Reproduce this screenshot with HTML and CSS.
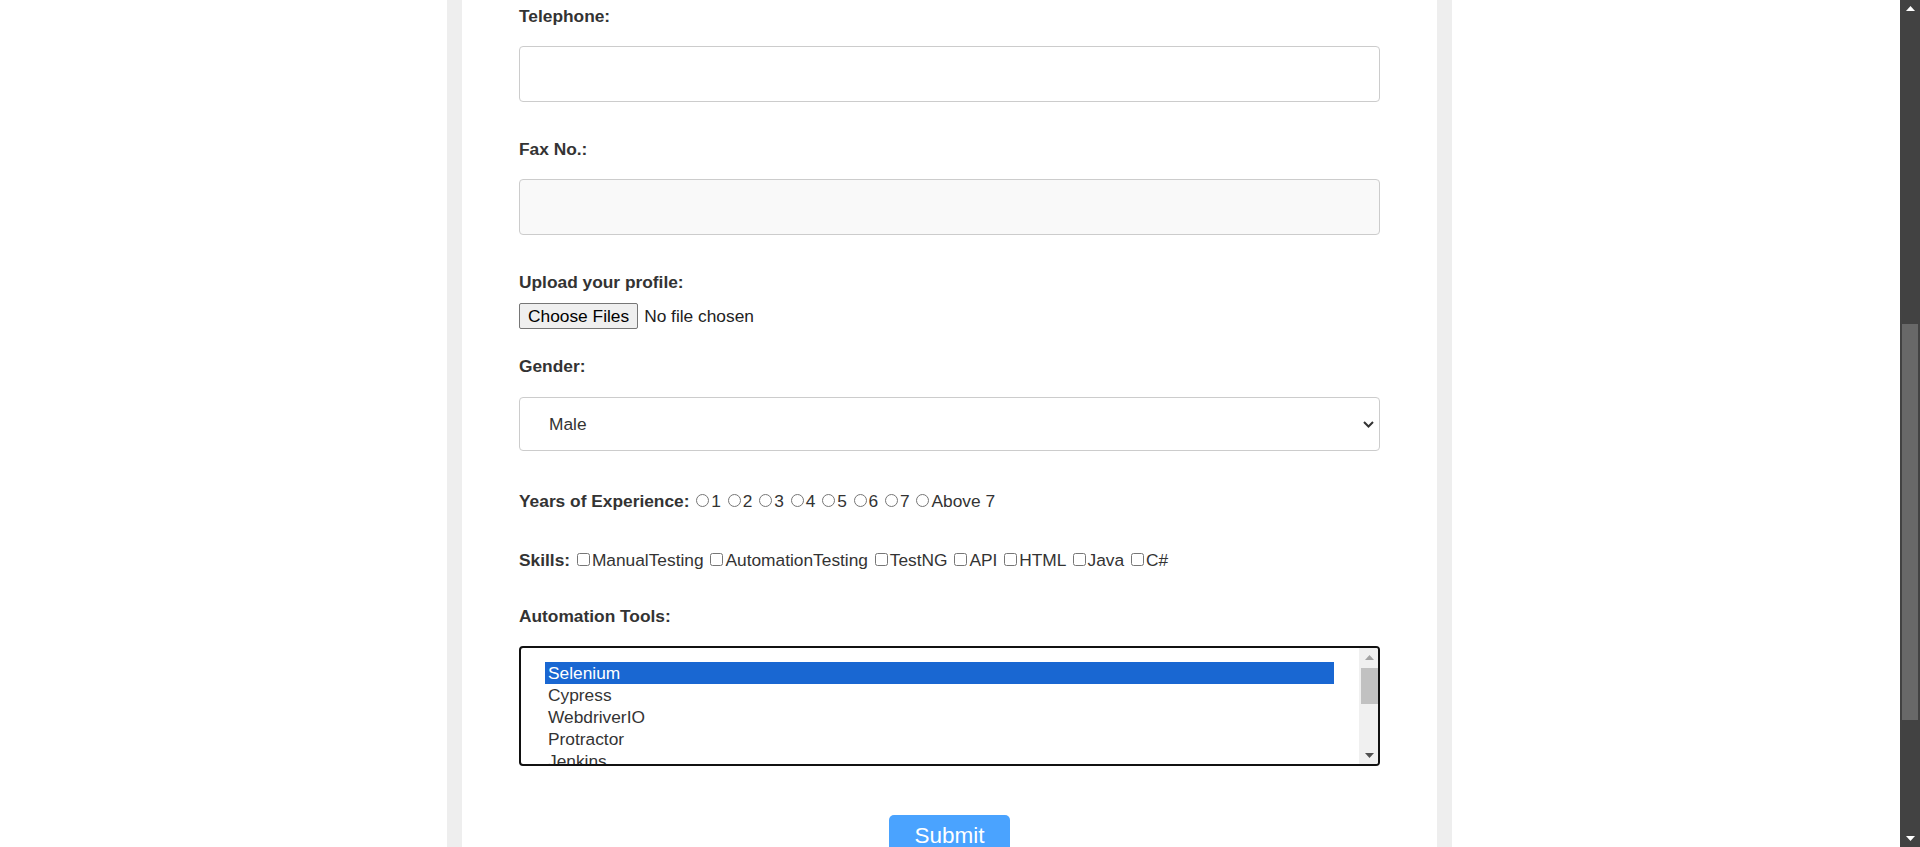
FILE: index.html
```html
<!DOCTYPE html>
<html lang="en">
<head>
<meta charset="utf-8">
<title>Registration Form</title>
<link rel="stylesheet" href="styles.css">
</head>
<body>
<div class="screen">
  <main class="viewport">
    <div class="frame">
      <form class="form">
        <div class="group">
          <label class="lbl" for="tel">Telephone:</label>
          <input class="text" id="tel" type="tel">
        </div>
        <div class="group">
          <label class="lbl" for="fax">Fax No.:</label>
          <input class="text ro" id="fax" type="text" readonly>
        </div>
        <div class="group">
          <label class="lbl">Upload your profile:</label>
          <div class="file">
            <button type="button" class="file-btn">Choose Files</button>
            <span class="file-name">No file chosen</span>
          </div>
        </div>
        <div class="group">
          <label class="lbl" for="gender">Gender:</label>
          <div class="select-wrap">
            <select id="gender" class="select">
              <option>Male</option>
              <option>Female</option>
              <option>Other</option>
            </select>
            <svg class="chev" width="11" height="7" viewBox="0 0 11 7"><path d="M1 1 L5.5 5.5 L10 1" fill="none" stroke="#333" stroke-width="2"/></svg>
          </div>
        </div>
        <div class="row row-exp">
          <b>Years of Experience:</b> <input type="radio" name="exp" class="rd">1 <input type="radio" name="exp" class="rd">2 <input type="radio" name="exp" class="rd">3 <input type="radio" name="exp" class="rd">4 <input type="radio" name="exp" class="rd">5 <input type="radio" name="exp" class="rd">6 <input type="radio" name="exp" class="rd">7 <input type="radio" name="exp" class="rd">Above 7
        </div>
        <div class="row row-skills">
          <b>Skills:</b> <input type="checkbox" class="cb">ManualTesting <input type="checkbox" class="cb">AutomationTesting <input type="checkbox" class="cb">TestNG <input type="checkbox" class="cb">API <input type="checkbox" class="cb">HTML <input type="checkbox" class="cb">Java <input type="checkbox" class="cb">C#
        </div>
        <div class="group group-tools">
          <label class="lbl">Automation Tools:</label>
          <div class="listbox" role="listbox" aria-multiselectable="true">
            <div class="opts">
              <div class="opt sel" role="option" aria-selected="true">Selenium</div>
              <div class="opt" role="option">Cypress</div>
              <div class="opt" role="option">WebdriverIO</div>
              <div class="opt" role="option">Protractor</div>
              <div class="opt" role="option">Jenkins</div>
            </div>
            <div class="lsb">
              <div class="lsb-btn"><svg width="9" height="5" viewBox="0 0 9 5"><path d="M0 5 L4.5 0 L9 5Z" fill="#a3a3a3"/></svg></div>
              <div class="lsb-thumb"></div>
              <div class="lsb-fill"></div>
              <div class="lsb-btn"><svg width="9" height="5" viewBox="0 0 9 5"><path d="M0 0 L4.5 5 L9 0Z" fill="#505050"/></svg></div>
            </div>
          </div>
        </div>
        <div class="actions">
          <button type="submit" class="submit">Submit</button>
        </div>
      </form>
    </div>
  </main>
  <div class="page-sb">
    <div class="psb-btn"><svg width="9" height="5" viewBox="0 0 9 5"><path d="M0 5 L4.5 0 L9 5Z" fill="#fff"/></svg></div>
    <div class="psb-gap"></div>
    <div class="psb-thumb"></div>
    <div class="psb-fill"></div>
    <div class="psb-btn"><svg width="9" height="5" viewBox="0 0 9 5"><path d="M0 0 L4.5 5 L9 0Z" fill="#fff"/></svg></div>
  </div>
</div>
</body>
</html>
```
FILE: styles.css
```css
html, body {
  margin: 0;
  padding: 0;
  height: 100%;
  overflow: hidden;
  background: #fff;
}

body {
  font-family: "Liberation Sans", Arial, sans-serif;
  font-size: 13pt;
  color: #333;
}

.screen {
  display: flex;
  height: 847px;
}

.viewport {
  flex: 1;
  display: flex;
  justify-content: center;
  overflow: hidden;
  padding-right: 1px;
}

.frame {
  flex: 0 0 1005px;
  box-sizing: border-box;
  border-left: 15px solid #eee;
  border-right: 15px solid #eee;
  background: #fff;
  padding: 6px 57px 0;
}

.form {
  display: flex;
  flex-direction: column;
}

.group {
  margin-bottom: 37px;
}

.lbl {
  display: block;
  font-weight: bold;
  line-height: 20px;
  height: 20px;
}

.text {
  display: block;
  margin-top: 20px;
  width: 100%;
  box-sizing: border-box;
  height: 56px;
  border: 1px solid #ccc;
  border-radius: 4px;
  background: #fff;
  font: inherit;
  padding: 0 10px;
}

.text.ro {
  background: #f9f9f9;
}

.file {
  display: flex;
  align-items: center;
  margin-top: 11px;
  height: 26px;
  margin-bottom: -10px;
}

.file-btn {
  height: 26px;
  box-sizing: border-box;
  padding: 0 8px;
  border: 1px solid #767676;
  border-radius: 2px;
  background: #efefef;
  color: #000;
  font-family: "Liberation Sans", Arial, sans-serif;
  font-size: 13pt;
  margin: 0 6px 0 0;
}

.file-name {
  color: #222;
  line-height: 20px;
}

.select-wrap {
  position: relative;
  margin-top: 21px;
}

.select {
  display: block;
  appearance: none;
  -webkit-appearance: none;
  width: 100%;
  height: 54px;
  box-sizing: border-box;
  border: 1px solid #ccc;
  border-radius: 4px;
  background: #fff;
  padding: 0 0 0 29px;
  font-family: "Liberation Sans", Arial, sans-serif;
  font-size: 13pt;
  color: #333;
}

.chev {
  position: absolute;
  right: 6px;
  top: 24px;
  pointer-events: none;
}

.row {
  height: 20px;
  line-height: 20px;
  white-space: nowrap;
}

.row-exp {
  margin-top: 3px;
}

.row-skills {
  margin-top: 39px;
}

.rd {
  width: 13px;
  height: 13px;
  margin: 3px 2px 0 2px;
}

.cb {
  width: 13px;
  height: 13px;
  margin: 3px 2px 3px 2px;
}

.group-tools {
  margin-top: 36px;
  margin-bottom: 0;
}

.listbox {
  margin-top: 20px;
  height: 120px;
  box-sizing: border-box;
  border: 2px solid #111;
  border-radius: 4px;
  display: flex;
  overflow: hidden;
  background: #fff;
}

.opts {
  flex: 1;
  padding: 14px 25px 0 24px;
  overflow: hidden;
}

.opt {
  height: 22px;
  line-height: 22px;
  padding-left: 3px;
  color: #333;
  white-space: nowrap;
}

.opt.sel {
  background: #1967d2;
  color: #fff;
}

.lsb {
  width: 19px;
  box-sizing: border-box;
  padding-left: 2px;
  background: #f0f0f0;
  display: flex;
  flex-direction: column;
}

.lsb-btn {
  height: 18px;
  display: flex;
  align-items: center;
  justify-content: center;
}

.lsb-thumb {
  margin-top: 2px;
  height: 36px;
  background: #c1c1c1;
}

.lsb-fill {
  flex: 1;
}

.actions {
  display: flex;
  justify-content: center;
  margin-top: 49px;
}

.submit {
  background: #4aa3ff;
  color: #fff;
  border: none;
  border-radius: 5px;
  font-family: "Liberation Sans", Arial, sans-serif;
  font-size: 22.5px;
  line-height: 26px;
  padding: 8px 25px;
}

.page-sb {
  flex: 0 0 20px;
  background: #424242;
  display: flex;
  flex-direction: column;
  align-items: center;
}

.psb-btn {
  height: 17px;
  width: 20px;
  display: flex;
  align-items: center;
  justify-content: center;
}

.psb-gap {
  height: 307px;
}

.psb-thumb {
  width: 16px;
  height: 396px;
  background: #686868;
}

.psb-fill {
  flex: 1;
}
```
